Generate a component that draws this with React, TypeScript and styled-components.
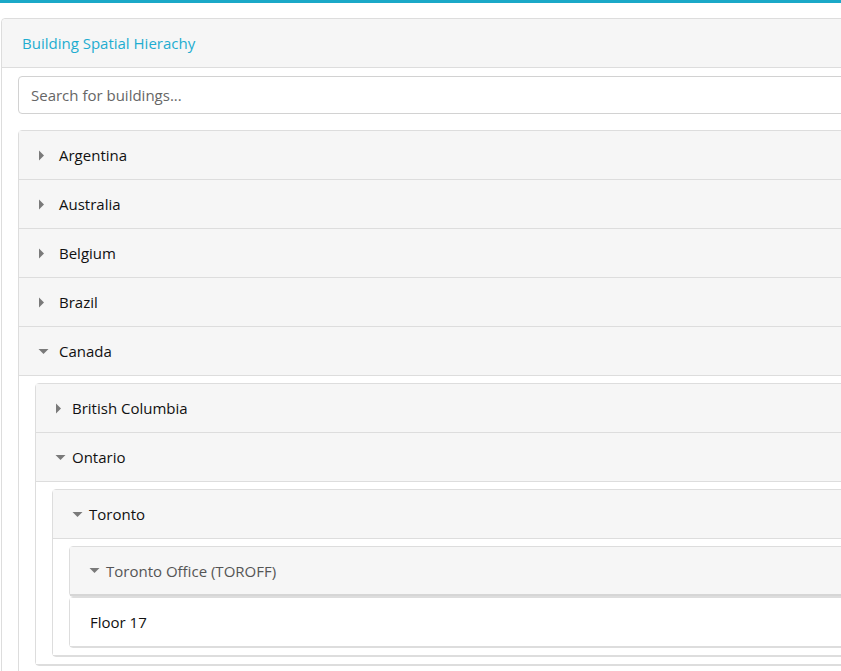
import React from "react";
import styled, { createGlobalStyle } from "styled-components";

const GlobalStyle = createGlobalStyle`
  html, body {
    margin: 0;
    padding: 0;
    background: #ffffff;
    overflow: hidden;
  }
  body {
    font-family: "Open Sans", "Noto Sans", "Liberation Sans", sans-serif;
    font-size: 15px;
    color: #111111;
  }
  * { box-sizing: border-box; }
`;

const TopBar = styled.div`
  height: 3px;
  background: #1ba9c8;
`;

const Page = styled.div`
  width: 1200px;
  padding: 15px 0 0 1px;
`;

const Card = styled.section`
  border: 1px solid #dddddd;
  border-radius: 4px;
  background: #ffffff;
`;

const CardHeader = styled.header`
  height: 49px;
  display: flex;
  align-items: center;
  padding: 0 20px;
  background: #f6f6f6;
  border-bottom: 1px solid #dddddd;
  border-radius: 4px 4px 0 0;
`;

const Title = styled.h3`
  margin: 0;
  font-size: 15px;
  font-weight: 400;
  color: #1eadd0;
`;

const CardBody = styled.div`
  padding: 8px 16px;
`;

const SearchInput = styled.input`
  display: block;
  width: 100%;
  height: 38px;
  padding: 0 12px;
  border: 1px solid #d2d2d2;
  border-radius: 4px;
  font-family: inherit;
  font-size: 15px;
  color: #333;
  outline: none;
  &::placeholder {
    color: #666666;
  }
`;

const Tree = styled.div`
  margin-top: 16px;
`;

const Group = styled.div`
  border: 1px solid #dddddd;
  border-radius: 4px;
  background: #ffffff;
`;

const Row = styled.div<{ $muted?: boolean; $strong?: boolean }>`
  height: 49px;
  display: flex;
  align-items: center;
  padding-left: 19px;
  background: #f6f6f6;
  border-bottom: ${(p) => (p.$strong ? "2px solid #d6d6d6" : "1px solid #dddddd")};
  color: ${(p) => (p.$muted ? "#555555" : "#111111")};
`;

const LeafRow = styled.div`
  height: 49px;
  display: flex;
  align-items: center;
  padding-left: 20px;
  background: #ffffff;
  border-bottom: 1px solid #dddddd;
  color: #111111;
`;

const CaretBox = styled.span<{ $gap: number }>`
  display: inline-flex;
  width: 11px;
  height: 11px;
  margin-right: ${(p) => p.$gap}px;
  flex: none;
`;

const Label = styled.span`
  white-space: nowrap;
`;

const Children = styled.div`
  padding: 7px 0 7px 16px;
  background: #ffffff;
  border-bottom: 1px solid #dddddd;
`;

const Caret = ({ open, gap }: { open: boolean; gap: number }) => (
  <CaretBox $gap={gap}>
    <svg width="11" height="11" viewBox="0 0 11 11">
      {open ? (
        <path d="M0.5 3 L10.5 3 L5.5 8 Z" fill="#7a7a7a" />
      ) : (
        <path d="M1 0.5 L6 5.5 L1 10.5 Z" fill="#7a7a7a" />
      )}
    </svg>
  </CaretBox>
);

type Node = {
  name: string;
  open?: boolean;
  building?: boolean;
  children?: Node[];
  leaf?: boolean;
};

const data: Node[] = [
  { name: "Argentina" },
  { name: "Australia" },
  { name: "Belgium" },
  { name: "Brazil" },
  {
    name: "Canada",
    open: true,
    children: [
      { name: "British Columbia" },
      {
        name: "Ontario",
        open: true,
        children: [
          {
            name: "Toronto",
            open: true,
            children: [
              {
                name: "Toronto Office (TOROFF)",
                open: true,
                building: true,
                children: [{ name: "Floor 17", leaf: true }],
              },
            ],
          },
        ],
      },
    ],
  },
];

const NodeList = ({ nodes, top }: { nodes: Node[]; top?: boolean }) => {
  const gap = top ? 10 : 6;
  const building = nodes.find((n) => n.building);
  if (building) {
    return (
      <>
        <Group>
          <Row $muted $strong>
            <Caret open gap={gap} />
            <Label>{building.name}</Label>
          </Row>
        </Group>
        <Group>
          {(building.children || []).map((c) => (
            <LeafRow key={c.name}>
              <Label>{c.name}</Label>
            </LeafRow>
          ))}
        </Group>
      </>
    );
  }
  return (
    <Group>
      {nodes.map((n) => (
        <React.Fragment key={n.name}>
          <Row>
            <Caret open={!!n.open} gap={gap} />
            <Label>{n.name}</Label>
          </Row>
          {n.open && n.children && (
            <Children>
              <NodeList nodes={n.children} />
            </Children>
          )}
        </React.Fragment>
      ))}
    </Group>
  );
};

export default function App() {
  return (
    <>
      <GlobalStyle />
      <TopBar />
      <Page>
        <Card>
          <CardHeader>
            <Title>Building Spatial Hierachy</Title>
          </CardHeader>
          <CardBody>
            <SearchInput placeholder="Search for buildings..." />
            <Tree>
              <NodeList nodes={data} top />
            </Tree>
          </CardBody>
        </Card>
      </Page>
    </>
  );
}
